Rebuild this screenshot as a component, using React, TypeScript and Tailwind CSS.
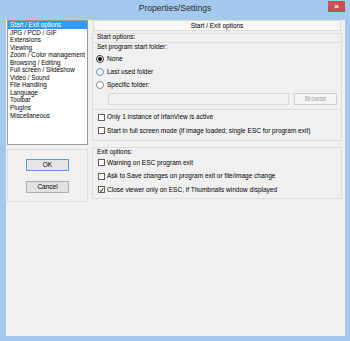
import React from "react";

const items = [
  "Start / Exit options",
  "JPG / PCD / GIF",
  "Extensions",
  "Viewing",
  "Zoom / Color management",
  "Browsing / Editing",
  "Full screen / Slideshow",
  "Video / Sound",
  "File Handling",
  "Language",
  "Toolbar",
  "PlugIns",
  "Miscellaneous",
];

function Check({ checked, label }: { checked?: boolean; label: string }) {
  return (
    <div className="flex h-[13.5px] items-center">
      <div className="ml-[5px] flex h-[7px] w-[7px] items-center justify-center border border-[#5f5f5f] bg-white">
        {checked && (
          <svg width="6" height="6" viewBox="0 0 6 6">
            <path d="M0.8 3.2 L2.3 4.8 L5.2 1" stroke="#000" strokeWidth="1.1" fill="none" />
          </svg>
        )}
      </div>
      <span className="ml-[2px] leading-[8px]">{label}</span>
    </div>
  );
}

function Radio({ selected, label, border }: { selected?: boolean; label: string; border: string }) {
  return (
    <div className="flex h-[13px] items-center">
      <div
        className={`ml-[3px] flex h-[8px] w-[8px] items-center justify-center rounded-full border bg-white ${border}`}
      >
        {selected && <div className="h-[4px] w-[4px] rounded-full bg-black" />}
      </div>
      <span className="ml-[3px] leading-[8px]">{label}</span>
    </div>
  );
}

export default function App() {
  return (
    <div
      className="flex h-[341px] w-[350px] flex-col bg-[#a3caee] text-[6.5px] text-black"
      style={{ fontFamily: '"Liberation Sans", Arial, sans-serif' }}
    >
      {/* Title bar */}
      <div className="grid h-[20px] grid-cols-[1fr_auto_1fr]">
        <div />
        <div className="pt-[3px] text-[8.6px] leading-[11px] text-[#2b2b2b]">Properties/Settings</div>
        <div className="flex justify-end">
          <div className="mr-[5px] mt-[1px] flex h-[11px] w-[17px] items-center justify-center bg-[#c75050] text-[8px] font-bold leading-none text-white">
            ×
          </div>
        </div>
      </div>

      {/* Client */}
      <div className="mb-[5px] ml-[6px] mr-[5px] flex flex-1 bg-[#f0f0f0]">
        {/* Left column */}
        <div className="ml-[1px] flex w-[81px] flex-col">
          <div className="h-[125px] border border-[#9a9a9a] bg-white text-[6.3px]">
            {items.map((it, i) => (
              <div
                key={it}
                className={`h-[7.55px] whitespace-nowrap pl-[2px] leading-[7.55px] ${
                  i === 0 ? "bg-[#3399ff] text-white" : ""
                }`}
              >
                {it}
              </div>
            ))}
          </div>
          <div className="mt-[4px] flex h-[53px] flex-col items-center border border-[#dcdcdc] pt-[9px]">
            <div className="flex h-[12px] w-[43px] items-center justify-center border border-[#5b9be3] bg-[#e5e5e5]">
              OK
            </div>
            <div className="mt-[10px] flex h-[12px] w-[43px] items-center justify-center border border-[#adadad] bg-[#e1e1e1]">
              Cancel
            </div>
          </div>
        </div>

        {/* Right column */}
        <div className="ml-[4px] flex w-[250px] flex-col">
          <div className="mx-[1px] flex h-[11px] items-center justify-center border border-[#dadada] bg-[#f7f7f7]">
            Start / Exit options
          </div>

          {/* Start options group */}
          <div className="mt-[2px] flex h-[108px] flex-col border border-[#dcdcdc]">
            <div className="h-[7px] pl-[4px] leading-[6px]">Start options:</div>
            <div className="mt-[1px] flex flex-col border-y border-[#dcdcdc]">
              <div className="h-[8px] pl-[4px] leading-[8px]">Set program start folder:</div>
              <div className="mt-[1px]">
                <Radio selected label="None" border="border-[#333333]" />
                <Radio label="Last used folder" border="border-[#5d93cf]" />
                <Radio label="Specific folder:" border="border-[#8a8a8a]" />
              </div>
              <div className="mb-[4px] mt-[1.5px] flex">
                <div className="ml-[15px] h-[12px] w-[181px] border border-[#d9d9d9] bg-[#f0f0f0]" />
                <div className="ml-[5px] flex h-[12px] w-[43px] items-center justify-center border border-[#cfcfcf] bg-[#f4f4f4] text-[#a3a3a3]">
                  Browse
                </div>
              </div>
            </div>
            <div className="mt-[1px]">
              <Check label="Only 1 instance of IrfanView is active" />
              <Check label="Start in full screen mode (if image loaded; single ESC for program exit)" />
            </div>
          </div>

          {/* Exit options group */}
          <div className="mt-[6px] flex h-[52px] flex-col border border-[#dcdcdc]">
            <div className="h-[8px] pl-[4px] leading-[8px]">Exit options:</div>
            <Check label="Warning on ESC program exit" />
            <Check label="Ask to Save changes on program exit or file/image change" />
            <Check checked label="Close viewer only on ESC, if Thumbnails window displayed" />
          </div>
        </div>
      </div>
    </div>
  );
}
